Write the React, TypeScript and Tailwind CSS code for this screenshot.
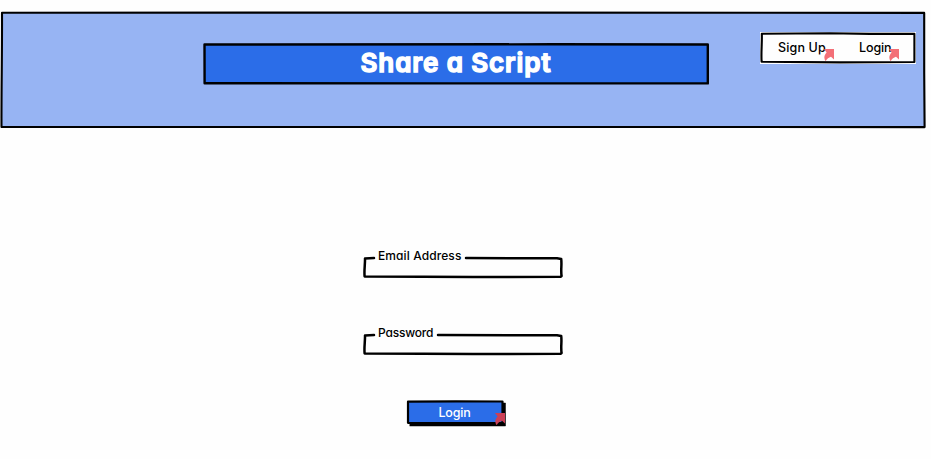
import React from "react";

type FrameProps = { w: number; h: number; d: string; fill?: string; stroke?: number };

/** Hand-drawn outline that sits behind the content of a box. */
function Frame({ w, h, d, fill = "none", stroke = 2.2 }: FrameProps) {
  return (
    <svg
      className="pointer-events-none absolute inset-0 overflow-visible"
      width={w}
      height={h}
      viewBox={`0 0 ${w} ${h}`}
      aria-hidden="true"
    >
      <path d={d} fill={fill} stroke="#000" strokeWidth={stroke} strokeLinejoin="round" strokeLinecap="round" />
    </svg>
  );
}

/** Small marker that shows an element links to another page. */
function LinkMark({ className, color = "#f36f77" }: { className: string; color?: string }) {
  return (
    <svg className={`absolute ${className}`} width="10" height="12" viewBox="0 0 10 12" aria-hidden="true">
      <path d="M0 0H10V10.6L7 7.8C4.6 8.6 3 9.8 1.6 12.2C-.4 9.4 0 6.4 2.6 3.6Z" fill={color} />
    </svg>
  );
}

function Field({ label, type, tracking, gap }: { label: string; type: string; tracking: string; gap: number }) {
  return (
    <label className="relative block h-[22px] w-[200px]">
      <Frame
        w={200}
        h={22}
        stroke={2.5}
        d={`M11 2.1L2 2.5C2.2 8 1 14 1.6 20.4L60 20.8L110 21.1L197.6 20.8L198.6 20C197.6 14 199 9 198.2 3L194 2.3L${gap} 2.1`}
      />
      <span className={`absolute -top-[8px] left-[15px] whitespace-nowrap text-[12px] leading-4 ${tracking}`}>
        {label}
      </span>
      <input type={type} aria-label={label} className="relative block h-full w-full bg-transparent px-2 text-xs outline-none" />
    </label>
  );
}

export default function App() {
  return (
    <div className="h-[459px] w-[931px] overflow-hidden bg-[#fefefe] pt-3 font-['Inter','Noto_Sans',sans-serif] font-medium text-black [font-feature-settings:'cv11']">
      <header className="relative flex h-[116px] w-[926px] items-start">
        <Frame w={926} h={116} fill="#97b4f3" stroke={2.1} d="M2 .8L400 .6L924.2 .9L924.2 60L924.6 115.1L400 115L1.5 115C1.3 80 2.2 40 2 .8Z" />

        <div className="relative ml-[203px] mt-[31px] flex h-[42px] w-[506px] items-center justify-center">
          <Frame w={506} h={42} fill="#2b6de8" stroke={2.4} d="M1.5 1.5L350 1.3L504.8 1.5L504.8 40.4L250 40.4L1.6 40.2Z" />
          <h1 className="relative -top-[1px] whitespace-nowrap text-[26px] font-semibold leading-8 tracking-[0.9px] text-white [-webkit-text-stroke:1.4px_white]">
            Share a Script
          </h1>
        </div>

        <nav className="relative ml-[51px] mt-5 flex h-[32px] w-[156px] items-center bg-[#fefefe] pl-[18px] text-[12.5px] leading-4">
          <Frame w={156} h={32} stroke={2.1} d="M1.8 1.8L70 1.3L110 1.9L154.4 1.8L154.4 30L80 30.4L1.6 29.8C1 20 2.2 10 1.8 1.8Z" />
          <a className="relative w-[81px] tracking-[0.15px]">
            Sign Up
            <LinkMark className="left-[46px] top-[9px]" />
          </a>
          <a className="relative w-[34px] tracking-[-0.1px]">
            Login
            <LinkMark className="left-[30px] top-[9px]" />
          </a>
        </nav>
      </header>

      <form className="ml-[363px] mt-[128px] flex w-[200px] flex-col" onSubmit={(e) => e.preventDefault()}>
        <Field label="Email Address" type="email" tracking="tracking-[0.1px]" gap={103} />
        <div className="mt-[55px]">
          <Field label="Password" type="password" tracking="tracking-[-0.2px]" gap={75} />
        </div>
        <button
          type="submit"
          className="relative ml-[43px] mt-[45px] flex h-[26px] w-[100px] items-center justify-center text-[12.5px] leading-4 tracking-[-0.2px] text-white"
        >
          <Frame w={100} h={26} fill="#000" stroke={0.5} d="M4 3H99.5V26H4Z" />
          <Frame w={100} h={26} fill="#2b6de8" d="M2 1.7L50 1.4L96.5 1.5L96.5 22.8L50 23.2L2 22.8Z" />
          <span className="relative -left-[1.5px]">Login</span>
          <LinkMark className="left-[89px] top-[13px]" color="#cb4057" />
        </button>
      </form>
    </div>
  );
}
